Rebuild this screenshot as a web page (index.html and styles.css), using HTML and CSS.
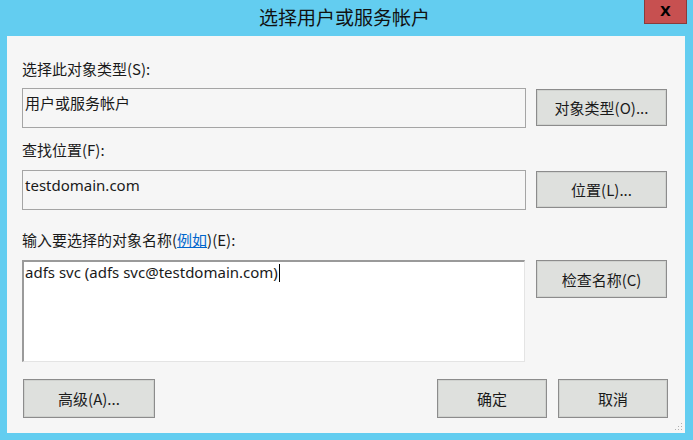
FILE: index.html
```html
<!DOCTYPE html>
<html lang="zh-CN">
<head>
<meta charset="utf-8">
<title>选择用户或服务帐户</title>
<link rel="stylesheet" href="styles.css">
</head>
<body>
<div class="window">
  <div class="titlebar">
    <div class="title">选择用户或服务帐户</div>
    <div class="close">X</div>
  </div>
  <div class="client">
    <div class="label label1">选择此对象类型(S):</div>
    <div class="row">
      <div class="field">用户或服务帐户</div>
      <div class="btn side">对象类型(O)...</div>
    </div>
    <div class="label label2">查找位置(F):</div>
    <div class="row">
      <div class="field latin">testdomain.com</div>
      <div class="btn side">位置(L)...</div>
    </div>
    <div class="label label3">输入要选择的对象名称(<span class="link">例如</span>)(E):</div>
    <div class="row row3">
      <div class="names latin">adfs svc (adfs svc@testdomain.com)<span class="caret"></span></div>
      <div class="btn side">检查名称(C)</div>
    </div>
    <div class="footer">
      <div class="btn adv">高级(A)...</div>
      <div class="spacer"></div>
      <div class="btn ok">确定</div>
      <div class="btn cancel">取消</div>
    </div>
    <svg class="grip" width="10" height="10" viewBox="0 0 10 10">
      <rect x="8" y="2" width="1" height="1" fill="#b0b0b0"/>
      <rect x="5" y="5" width="1" height="1" fill="#b0b0b0"/>
      <rect x="8" y="5" width="1" height="1" fill="#b0b0b0"/>
      <rect x="2" y="8" width="1" height="1" fill="#b0b0b0"/>
      <rect x="5" y="8" width="1" height="1" fill="#b0b0b0"/>
      <rect x="8" y="8" width="1" height="1" fill="#b0b0b0"/>
    </svg>
  </div>
</div>
</body>
</html>
```
FILE: styles.css
```css
* { box-sizing: border-box; }
html, body {
  margin: 0;
  padding: 0;
  width: 693px;
  height: 440px;
  overflow: hidden;
  background: #63cdf0;
}
body {
  font-family: "Noto Sans CJK SC", sans-serif;
  font-size: 15px;
  color: #1a1a1a;
}
.window {
  width: 693px;
  height: 440px;
  display: flex;
  flex-direction: column;
}
.titlebar {
  position: relative;
  height: 36px;
  display: flex;
  align-items: center;
  justify-content: center;
}
.title {
  font-size: 19px;
  line-height: 24px;
  margin-top: -3px;
  margin-left: -4px;
  color: #111;
}
.close {
  position: absolute;
  right: 6px;
  top: -1px;
  width: 43px;
  height: 25px;
  background: #c75050;
  border: 1px solid #8a3b3b;
  color: #000;
  font-family: "DejaVu Sans", sans-serif;
  font-weight: bold;
  font-size: 14px;
  line-height: 22px;
  text-align: center;
}
.client {
  position: relative;
  margin: 0 8px 7px 7px;
  flex: 1;
  background: #f6f6f6;
  padding-left: 15px;
  display: flex;
  flex-direction: column;
}
.label {
  height: 20px;
  line-height: 20px;
  white-space: nowrap;
}
.label1 { margin-top: 23px; margin-bottom: 9px; }
.label2 { margin-top: 12px; margin-bottom: 10px; }
.label3 { margin-top: 20px; margin-bottom: 10px; }
.link {
  color: #0066cc;
  text-decoration: underline;
}
.row {
  display: flex;
  align-items: flex-start;
  gap: 10px;
}
.field {
  width: 504px;
  height: 40px;
  border: 1px solid #a5a5a5;
  background: #f6f6f6;
  padding: 4px 2px 0;
  line-height: 20px;
  white-space: nowrap;
}
.latin {
  font-family: "Noto Sans", "Noto Sans CJK SC", sans-serif;
}
.btn {
  height: 38px;
  background: #dee0dd;
  border: 1px solid #8c8c8c;
  box-shadow: inset 0 0 0 1px #d0d2cf;
  display: flex;
  align-items: center;
  justify-content: center;
  white-space: nowrap;
}
.side {
  width: 131px;
  height: 37px;
  margin-top: 1px;
}
.row3 { gap: 11px; }
.row3 .side {
  height: 38px;
  margin-top: 0;
}
.names {
  position: relative;
  width: 503px;
  height: 102px;
  background: #fff;
  border-top: 2px solid #9a9a9a;
  border-left: 2px solid #9a9a9a;
  border-right: 1px solid #e4e4e4;
  border-bottom: 1px solid #e4e4e4;
  padding: 0 1px;
  line-height: 20px;
  white-space: nowrap;
}
.caret {
  display: inline-block;
  width: 1px;
  height: 18px;
  background: #000;
  vertical-align: -4px;
  margin-left: 1px;
}
.footer {
  display: flex;
  margin-top: 17px;
  padding-right: 17px;
  gap: 11px;
}
.spacer { flex: 1; }
.adv { width: 132px; height: 39px; margin-left: 1px; }
.ok { width: 110px; height: 39px; }
.cancel { width: 110px; height: 39px; }
.grip {
  position: absolute;
  right: 2px;
  bottom: 2px;
}
```
